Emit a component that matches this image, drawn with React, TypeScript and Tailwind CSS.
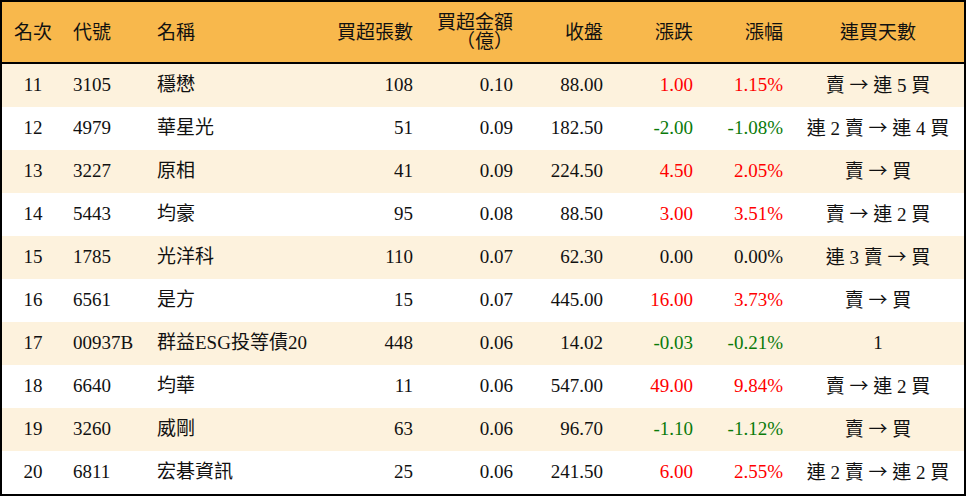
const rows = [
  { rank: "11", code: "3105", name: "穩懋", vol: "108", amt: "0.10", close: "88.00", chg: "1.00", pct: "1.15%", dir: 1, streak: "賣 → 連 5 買" },
  { rank: "12", code: "4979", name: "華星光", vol: "51", amt: "0.09", close: "182.50", chg: "-2.00", pct: "-1.08%", dir: -1, streak: "連 2 賣 → 連 4 買" },
  { rank: "13", code: "3227", name: "原相", vol: "41", amt: "0.09", close: "224.50", chg: "4.50", pct: "2.05%", dir: 1, streak: "賣 → 買" },
  { rank: "14", code: "5443", name: "均豪", vol: "95", amt: "0.08", close: "88.50", chg: "3.00", pct: "3.51%", dir: 1, streak: "賣 → 連 2 買" },
  { rank: "15", code: "1785", name: "光洋科", vol: "110", amt: "0.07", close: "62.30", chg: "0.00", pct: "0.00%", dir: 0, streak: "連 3 賣 → 買" },
  { rank: "16", code: "6561", name: "是方", vol: "15", amt: "0.07", close: "445.00", chg: "16.00", pct: "3.73%", dir: 1, streak: "賣 → 買" },
  { rank: "17", code: "00937B", name: "群益ESG投等債20", vol: "448", amt: "0.06", close: "14.02", chg: "-0.03", pct: "-0.21%", dir: -1, streak: "1" },
  { rank: "18", code: "6640", name: "均華", vol: "11", amt: "0.06", close: "547.00", chg: "49.00", pct: "9.84%", dir: 1, streak: "賣 → 連 2 買" },
  { rank: "19", code: "3260", name: "威剛", vol: "63", amt: "0.06", close: "96.70", chg: "-1.10", pct: "-1.12%", dir: -1, streak: "賣 → 買" },
  { rank: "20", code: "6811", name: "宏碁資訊", vol: "25", amt: "0.06", close: "241.50", chg: "6.00", pct: "2.55%", dir: 1, streak: "連 2 賣 → 連 2 買" },
];

const cols = "grid grid-cols-[62px_84px_182px_92px_100px_90px_90px_90px_172px]";

// the arrow in the source is a full-width one, so it's set in the CJK face
function Streak({ text }: { text: string }) {
  const [from, to] = text.split(" → ");
  if (to === undefined) return <>{text}</>;
  return (
    <>
      {from}{" "}
      <span style={{ fontFamily: '"Noto Sans CJK TC", sans-serif' }}>→</span>{" "}
      {to}
    </>
  );
}

export default function App() {
  return (
    <div
      className="w-[966px] h-[496px] border-2 border-black bg-white text-[19px] text-[#111] [text-spacing-trim:space-all]"
      style={{ fontFamily: '"Liberation Serif", "Noto Sans CJK TC", serif' }}
    >
      <div className={`${cols} h-[62px] items-center bg-[#f8b84c] border-b-2 border-black leading-[19px]`}>
        <div className="text-center">名次</div>
        <div className="pl-[9px]">代號</div>
        <div className="pl-[9px]">名稱</div>
        <div className="pr-[9px] text-right">買超張數</div>
        <div className="pr-[9px] text-right">
          買超金額
          <br />
          （億）
        </div>
        <div className="pr-[9px] text-right">收盤</div>
        <div className="pr-[9px] text-right">漲跌</div>
        <div className="pr-[9px] text-right">漲幅</div>
        <div className="text-center">連買天數</div>
      </div>
      {rows.map((r, i) => {
        const tone = r.dir > 0 ? "text-[#ff0000]" : r.dir < 0 ? "text-[#0a7a0a]" : "";
        return (
          <div
            key={r.rank}
            className={`${cols} h-[43px] items-center ${i % 2 === 0 ? "bg-[#fdf2dd]" : "bg-white"}`}
          >
            <div className="text-center">{r.rank}</div>
            <div className="pl-[9px]">{r.code}</div>
            <div className="pl-[9px]">{r.name}</div>
            <div className="pr-[9px] text-right">{r.vol}</div>
            <div className="pr-[9px] text-right">{r.amt}</div>
            <div className="pr-[9px] text-right">{r.close}</div>
            <div className={`pr-[9px] text-right ${tone}`}>{r.chg}</div>
            <div className={`pr-[9px] text-right ${tone}`}>{r.pct}</div>
            <div className="text-center whitespace-nowrap">
              <Streak text={r.streak} />
            </div>
          </div>
        );
      })}
    </div>
  );
}
